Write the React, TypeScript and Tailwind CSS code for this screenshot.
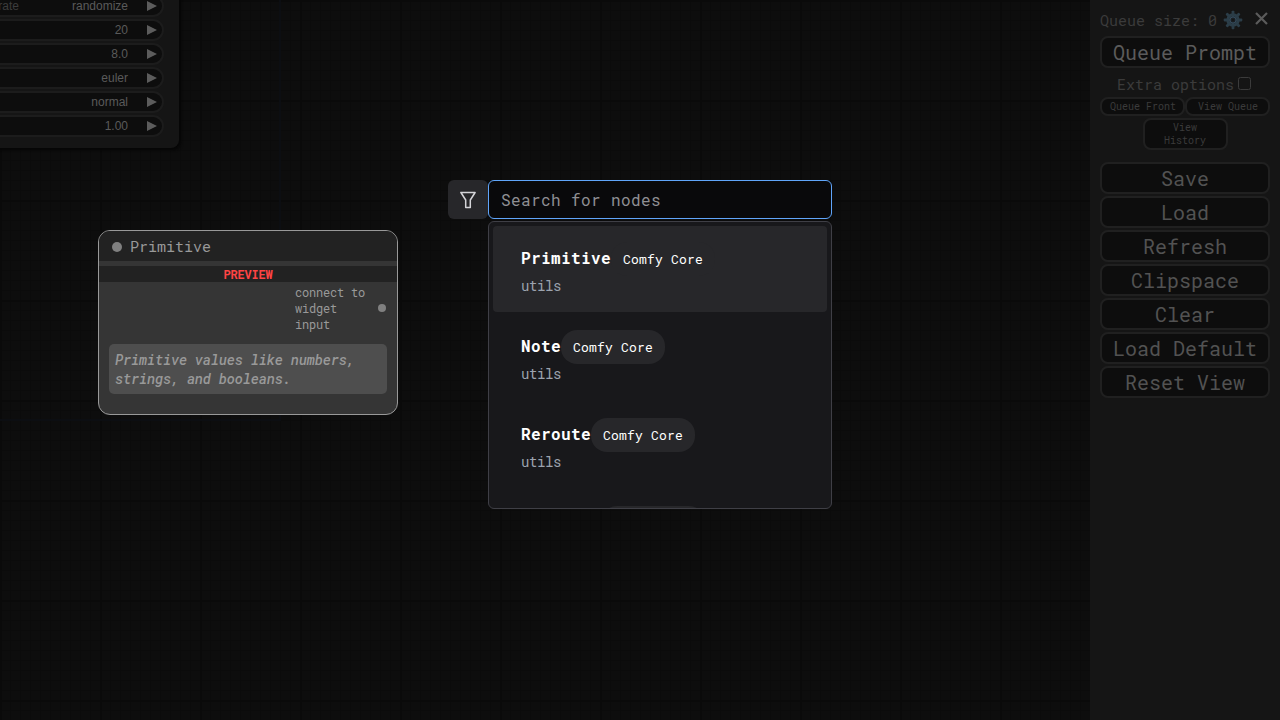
import type { ReactNode } from "react";

const widgets = [
  { label: "control_after_generate", value: "randomize" },
  { label: "", value: "20" },
  { label: "", value: "8.0" },
  { label: "", value: "euler" },
  { label: "", value: "normal" },
  { label: "", value: "1.00" },
];

const results = [
  { name: "Primitive", active: true },
  { name: "Note", active: false },
  { name: "Reroute", active: false },
];

const actions = ["Save", "Load", "Refresh", "Clipspace", "Clear", "Load Default", "Reset View"];

function CanvasGrid() {
  return (
    <svg className="absolute inset-0" width="1280" height="720" shapeRendering="crispEdges">
      <defs>
        <pattern id="minor" width="10" height="10" patternUnits="userSpaceOnUse">
          <path d="M0.5 0V10M0 0.5H10" stroke="#0b0b0b" />
        </pattern>
        <pattern id="major" width="100" height="100" patternUnits="userSpaceOnUse">
          <path d="M1 0V100M0 1H100" stroke="#0a0a0a" strokeWidth="2" />
        </pattern>
      </defs>
      <rect width="1280" height="720" fill="#0d0d0d" />
      <rect width="1280" height="720" fill="url(#minor)" />
      <rect width="1280" height="720" fill="url(#major)" />
      <path d="M280 0V420H0" fill="none" stroke="#0c0e12" strokeWidth="2" />
    </svg>
  );
}

function SamplerNode() {
  return (
    <div className="absolute -left-20 -top-4 flex h-[164px] w-[259px] flex-col gap-[2px] rounded-br-[8px] bg-[#151515] pr-[15px] pt-[11px] font-['Liberation_Sans',sans-serif] text-[12px] shadow-[2px_2px_3px_#060606]">
      {widgets.map((w) => (
        <div
          key={w.value}
          className="flex h-[22px] shrink-0 items-center justify-end rounded-r-full border-2 border-[#1c1c1c] bg-[#0d0d0d] pr-[5px] text-[#5a5a5a]"
        >
          <span className="mr-auto flex w-[97px] justify-end whitespace-nowrap text-[#3c3c3c]">{w.label}</span>
          <span className="mr-[19px]">{w.value}</span>
          <svg width="10" height="10" viewBox="0 0 10 10">
            <path d="M0 0L10 5L0 10Z" fill="#5c5c5c" />
          </svg>
        </div>
      ))}
    </div>
  );
}

function PreviewNode() {
  return (
    <div className="absolute left-[98px] top-[230px] flex h-[185px] w-[300px] flex-col overflow-hidden rounded-[12px] border border-[#999] bg-[#353535] text-[#999]">
      <div className="flex h-[30px] items-center gap-2 bg-[#222] pl-[13px] text-[15px]">
        <span className="mt-px size-[10px] rounded-full bg-[#808080]" />
        <span>Primitive</span>
      </div>
      <div className="mt-[5px] h-4 bg-[#222] text-center text-[12px] font-bold leading-4 tracking-[-0.2px] text-[#ff4444]">
        PREVIEW
      </div>
      <div className="flex h-[52px] justify-end pt-[2px] text-[12px] leading-4 tracking-[-0.2px]">
        <span className="w-[83px]">
          connect to
          <br />
          widget
          <br />
          input
        </span>
        <span className="mr-[11px] mt-5 size-2 rounded-full bg-[#808080]" />
      </div>
      <div className="mx-[10px] mt-[10px] h-[50px] whitespace-nowrap rounded-[5px] bg-[#4e4e4e] px-[6px] pt-[6px] text-[14px] font-medium italic leading-[19px] tracking-[-0.23px]">
        Primitive values like numbers,
        <br />
        strings, and booleans.
      </div>
    </div>
  );
}

function SearchBox() {
  return (
    <div className="absolute left-[448px] top-[180px] w-[384px]">
      <div className="flex h-[39px]">
        <button className="flex w-10 items-center justify-center rounded-[6px] bg-[#27272a] text-[#d4d4d8]">
          <svg width="16" height="18" viewBox="0 0 16 18" fill="none" stroke="currentColor" strokeWidth="1.5" strokeLinejoin="round">
            <path d="M0.9 1.5H15.1L10.3 9V16.6H5.7V9Z" />
          </svg>
        </button>
        <div className="flex flex-1 items-center rounded-[6px] border border-[#60a5fa] bg-[#09090b] px-3 text-[16px] tracking-[0.4px] text-[#8f8f93]">
          Search for nodes
        </div>
      </div>
      <div className="ml-10 mt-[2px] flex h-[288px] flex-col gap-[2px] overflow-hidden rounded-[6px] border border-[#3f3f46] bg-[#18181b] p-1">
        {results.map((r) => (
          <div key={r.name} className={`h-[86px] shrink-0 rounded-[4px] px-7 pt-4 ${r.active ? "bg-[#27272a]" : ""}`}>
            <div className="flex h-[34px] items-center">
              <span className="pb-[2px] text-[16px] font-bold tracking-[0.4px] text-white">{r.name}</span>
              <span className="flex h-[34px] items-center rounded-[16px] bg-[#27272a] px-3 pt-[2px] text-[13px] tracking-[0.2px] text-white">
                Comfy Core
              </span>
            </div>
            <div className="text-[14px] leading-5 tracking-[-0.4px] text-[#9ca3af]">utils</div>
          </div>
        ))}
        <div className="shrink-0 px-7 pt-4">
          <div className="ml-20 h-[34px] w-[104px] rounded-[16px] bg-[#27272a]" />
        </div>
      </div>
    </div>
  );
}

function MenuButton({ children, className }: { children: ReactNode; className: string }) {
  return (
    <button className={`flex items-center justify-center rounded-[8px] border-2 border-[#202020] bg-[#0d0d0d] ${className}`}>
      {children}
    </button>
  );
}

function Gear() {
  return (
    <svg className="ml-px" width="20" height="20" viewBox="-10 -10 20 20">
      <g fill="#2b3d48">
        {[0, 45, 90, 135].map((a) => (
          <rect key={a} x="-1.4" y="-9.3" width="2.8" height="18.6" rx="0.8" transform={`rotate(${a})`} />
        ))}
      </g>
      <circle r="5.2" fill="none" stroke="#2b3d48" strokeWidth="3" />
      <circle r="3" fill="#1c2328" stroke="#34495a" strokeWidth="1" />
      <circle r="1.5" fill="#151719" />
    </svg>
  );
}

function SideMenu() {
  return (
    <div className="absolute right-0 top-0 flex h-full w-[190px] flex-col bg-[#151515] px-[10px] text-[#3b3b3b]">
      <div className="flex h-9 items-center pt-1">
        <span className="w-[122px] whitespace-nowrap text-[15px]">Queue size: 0</span>
        <Gear />
        <svg className="mb-[3px] ml-3" width="13" height="13" viewBox="0 0 13 13">
          <path d="M1 1L12 12M12 1L1 12" stroke="#5b5b5b" strokeWidth="2.2" />
        </svg>
      </div>
      <MenuButton className="h-8 text-[20px] text-[#5b5b5b]">Queue Prompt</MenuButton>
      <div className="flex h-[29px] items-center justify-center pr-[2px] pt-1 text-[15px]">
        <span>Extra options</span>
        <span className="mb-[2px] ml-1 size-[13px] rounded-[2.5px] border border-[#3b3b3b] bg-[#151515]" />
      </div>
      <div className="flex h-[19px] text-[10px]">
        <MenuButton className="w-[85px]">
          <span className="ml-px">Queue Front</span>
        </MenuButton>
        <MenuButton className="w-[85px]">
          <span className="ml-px">View Queue</span>
        </MenuButton>
      </div>
      <MenuButton className="mt-[2px] h-8 w-[85px] self-center text-[10px] leading-[13px]">
        <span>
          View
          <br />
          History
        </span>
      </MenuButton>
      <div className="mt-3 flex flex-col gap-[2px] text-[20px] text-[#525252]">
        {actions.map((a) => (
          <MenuButton key={a} className="h-8">
            {a}
          </MenuButton>
        ))}
      </div>
    </div>
  );
}

export default function App() {
  return (
    <div className="relative h-[720px] w-[1280px] overflow-hidden bg-[#0d0d0d] font-['Roboto_Mono','DejaVu_Sans_Mono',monospace]">
      <CanvasGrid />
      <SamplerNode />
      <PreviewNode />
      <SearchBox />
      <SideMenu />
    </div>
  );
}
